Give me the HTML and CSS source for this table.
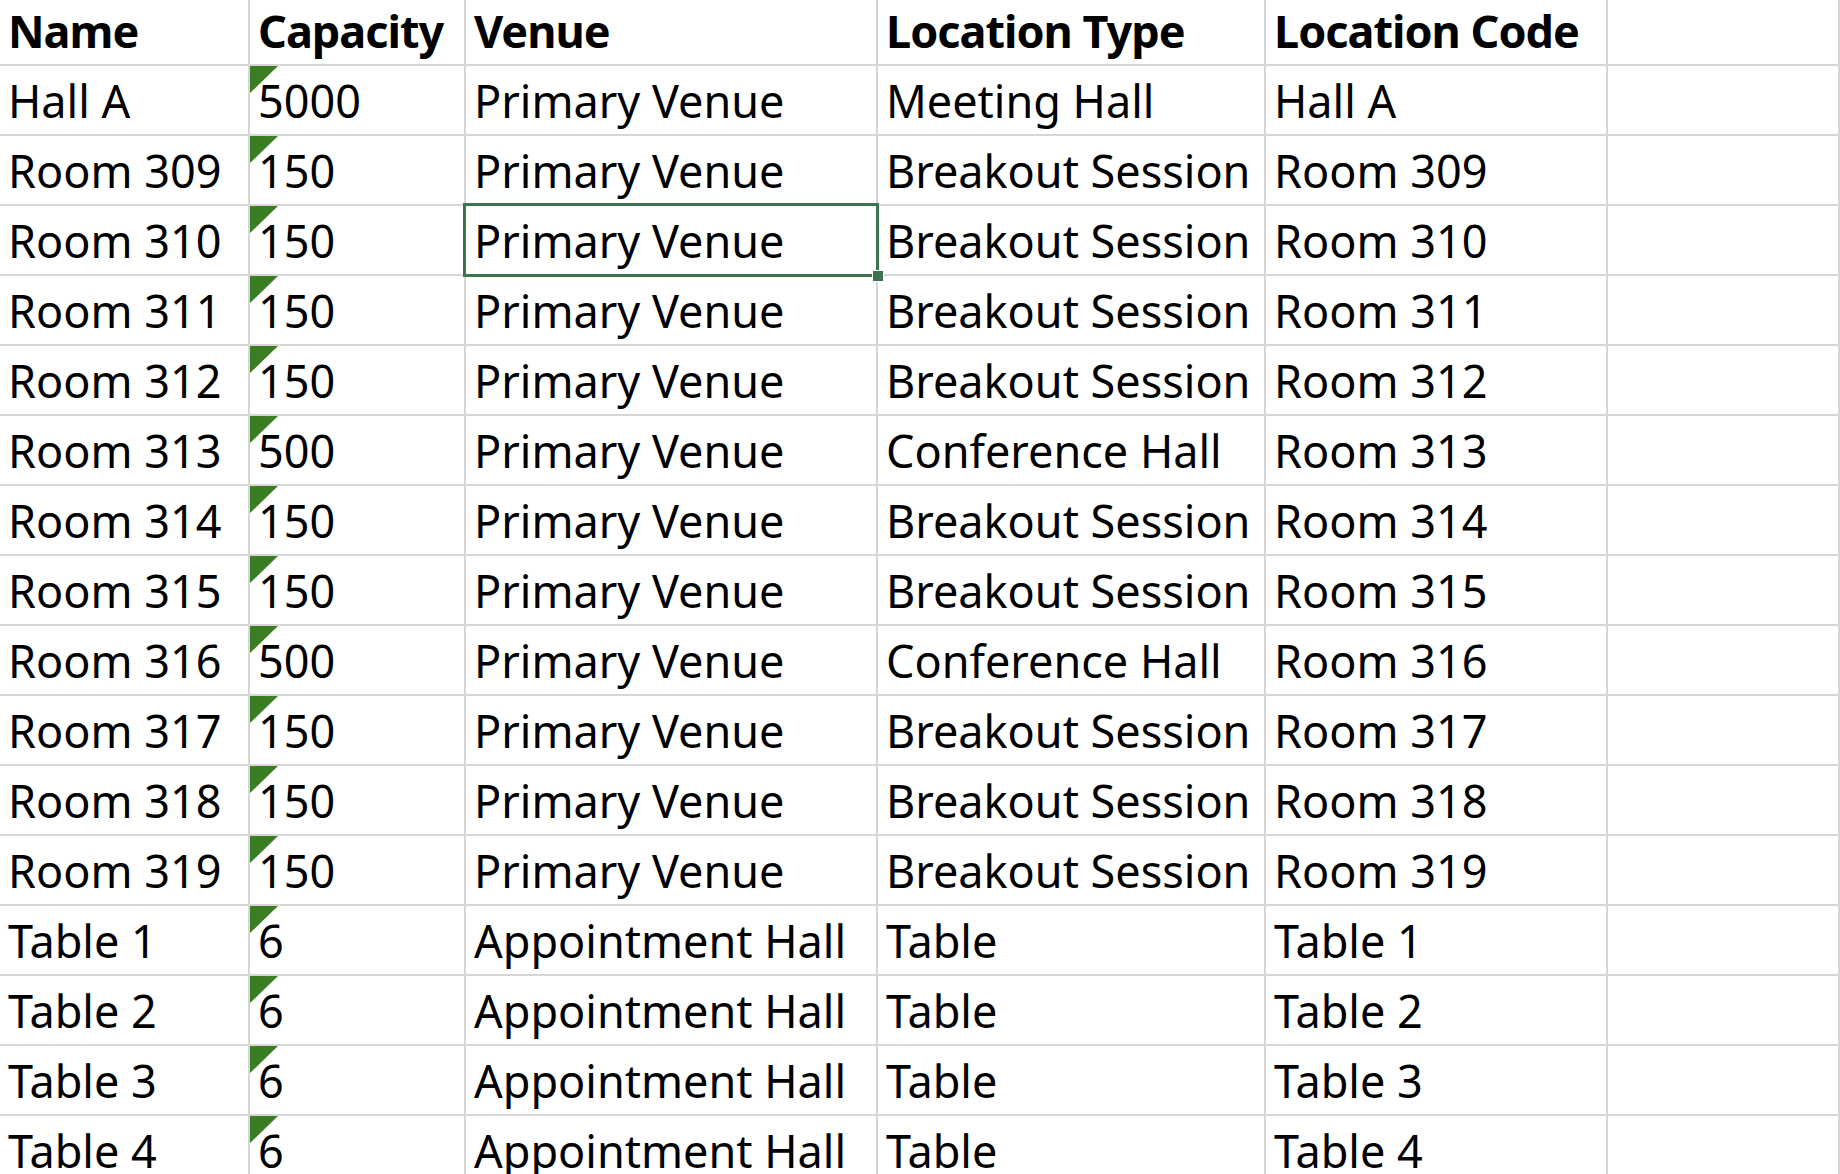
FILE: index.html
```html
<!DOCTYPE html>
<html>
<head>
<meta charset="utf-8">
<link rel="stylesheet" href="styles.css">
</head>
<body>
<div class="sheet">
  <div class="row head">
    <div class="cell">Name</div>
    <div class="cell">Capacity</div>
    <div class="cell">Venue</div>
    <div class="cell">Location Type</div>
    <div class="cell">Location Code</div>
    <div class="cell"></div>
  </div>
  <div class="row"><div class="cell">Hall A</div><div class="cell num">5000</div><div class="cell">Primary Venue</div><div class="cell">Meeting Hall</div><div class="cell">Hall A</div><div class="cell"></div></div>
  <div class="row"><div class="cell">Room 309</div><div class="cell num">150</div><div class="cell">Primary Venue</div><div class="cell">Breakout Session</div><div class="cell">Room 309</div><div class="cell"></div></div>
  <div class="row"><div class="cell">Room 310</div><div class="cell num">150</div><div class="cell">Primary Venue</div><div class="cell">Breakout Session</div><div class="cell">Room 310</div><div class="cell"></div></div>
  <div class="row"><div class="cell">Room 311</div><div class="cell num">150</div><div class="cell">Primary Venue</div><div class="cell">Breakout Session</div><div class="cell">Room 311</div><div class="cell"></div></div>
  <div class="row"><div class="cell">Room 312</div><div class="cell num">150</div><div class="cell">Primary Venue</div><div class="cell">Breakout Session</div><div class="cell">Room 312</div><div class="cell"></div></div>
  <div class="row"><div class="cell">Room 313</div><div class="cell num">500</div><div class="cell">Primary Venue</div><div class="cell">Conference Hall</div><div class="cell">Room 313</div><div class="cell"></div></div>
  <div class="row"><div class="cell">Room 314</div><div class="cell num">150</div><div class="cell">Primary Venue</div><div class="cell">Breakout Session</div><div class="cell">Room 314</div><div class="cell"></div></div>
  <div class="row"><div class="cell">Room 315</div><div class="cell num">150</div><div class="cell">Primary Venue</div><div class="cell">Breakout Session</div><div class="cell">Room 315</div><div class="cell"></div></div>
  <div class="row"><div class="cell">Room 316</div><div class="cell num">500</div><div class="cell">Primary Venue</div><div class="cell">Conference Hall</div><div class="cell">Room 316</div><div class="cell"></div></div>
  <div class="row"><div class="cell">Room 317</div><div class="cell num">150</div><div class="cell">Primary Venue</div><div class="cell">Breakout Session</div><div class="cell">Room 317</div><div class="cell"></div></div>
  <div class="row"><div class="cell">Room 318</div><div class="cell num">150</div><div class="cell">Primary Venue</div><div class="cell">Breakout Session</div><div class="cell">Room 318</div><div class="cell"></div></div>
  <div class="row"><div class="cell">Room 319</div><div class="cell num">150</div><div class="cell">Primary Venue</div><div class="cell">Breakout Session</div><div class="cell">Room 319</div><div class="cell"></div></div>
  <div class="row"><div class="cell">Table 1</div><div class="cell num">6</div><div class="cell">Appointment Hall</div><div class="cell">Table</div><div class="cell">Table 1</div><div class="cell"></div></div>
  <div class="row"><div class="cell">Table 2</div><div class="cell num">6</div><div class="cell">Appointment Hall</div><div class="cell">Table</div><div class="cell">Table 2</div><div class="cell"></div></div>
  <div class="row"><div class="cell">Table 3</div><div class="cell num">6</div><div class="cell">Appointment Hall</div><div class="cell">Table</div><div class="cell">Table 3</div><div class="cell"></div></div>
  <div class="row"><div class="cell">Table 4</div><div class="cell num">6</div><div class="cell">Appointment Hall</div><div class="cell">Table</div><div class="cell">Table 4</div><div class="cell"></div></div>
  <div class="selection"><div class="handle"></div></div>
</div>
</body>
</html>
```
FILE: styles.css
```css
html, body {
  margin: 0;
  padding: 0;
  background: #ffffff;
}
body {
  width: 1840px;
  height: 1174px;
  overflow: hidden;
  font-family: "Noto Sans", "Open Sans", sans-serif;
  color: #000000;
}
.sheet {
  position: relative;
}
.row {
  display: grid;
  grid-template-columns: 250px 216px 412px 388px 342px 1fr;
  height: 70px;
}
.row.head {
  height: 66px;
  font-weight: 700;
  letter-spacing: -1px;
}
.cell {
  position: relative;
  box-sizing: border-box;
  border-right: 2px solid #d6d6d6;
  border-bottom: 2px solid #d6d6d6;
  display: flex;
  align-items: flex-end;
  padding: 0 0 11px 8px;
  font-size: 45px;
  line-height: 45px;
  white-space: nowrap;
  overflow: visible;
}
.cell.num {
  padding-left: 8px;
}
.cell.num::before {
  content: "";
  position: absolute;
  left: 0;
  top: 0;
  width: 0;
  height: 0;
  border-top: 27px solid #3b7d23;
  border-right: 28px solid transparent;
}
.selection {
  position: absolute;
  left: 463px;
  top: 203px;
  width: 416px;
  height: 74px;
  box-sizing: border-box;
  border: 3px solid #3e7350;
}
.handle {
  position: absolute;
  right: -8px;
  bottom: -8px;
  width: 10px;
  height: 10px;
  background: #3e7350;
  border: 1px solid #ffffff;
}
```
